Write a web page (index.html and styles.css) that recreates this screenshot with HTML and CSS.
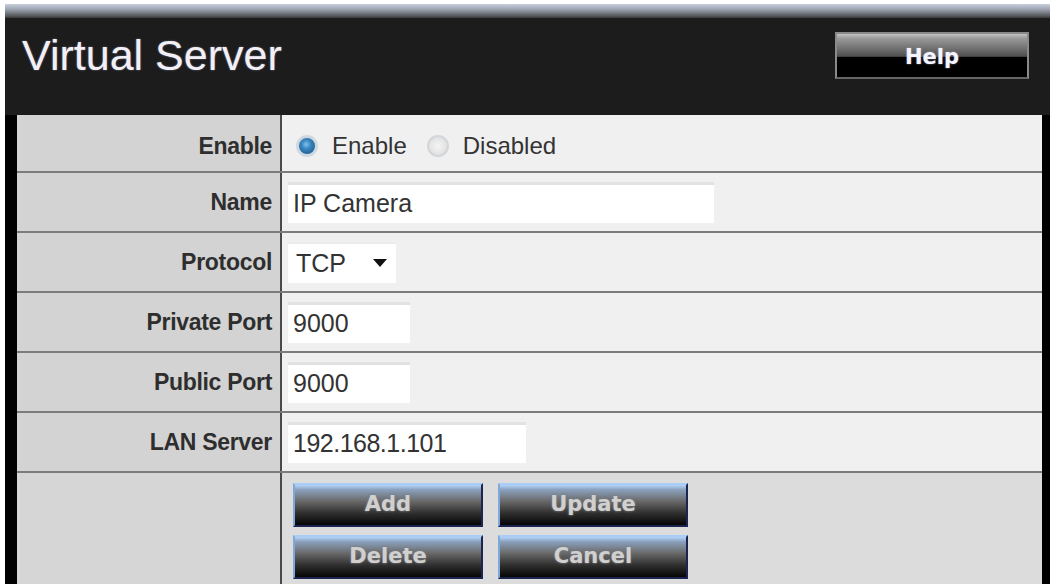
FILE: index.html
```html
<!DOCTYPE html>
<html>
<head>
<meta charset="utf-8">
<title>Virtual Server</title>
<link rel="stylesheet" href="styles.css">
</head>
<body>
<div class="page">
  <div class="topbar"></div>
  <div class="header">
    <h1 class="title">Virtual Server</h1>
    <button class="help-btn" type="button">Help</button>
  </div>
  <div class="form">
    <div class="row row-first">
      <div class="label">Enable</div>
      <div class="value">
        <label class="radio"><input type="radio" name="en" checked><span>Enable</span></label>
        <label class="radio"><input type="radio" name="en"><span>Disabled</span></label>
      </div>
    </div>
    <div class="row">
      <div class="label">Name</div>
      <div class="value"><input class="field field-name" type="text" value="IP Camera"></div>
    </div>
    <div class="row">
      <div class="label">Protocol</div>
      <div class="value">
        <span class="select-wrap">
          <select class="select"><option>TCP</option><option>UDP</option><option>Both</option></select>
          <svg class="select-arrow" width="14" height="9" viewBox="0 0 14 9"><path d="M0 0 H14 L7 8 Z" fill="#111"/></svg>
        </span>
      </div>
    </div>
    <div class="row">
      <div class="label">Private Port</div>
      <div class="value"><input class="field field-port" type="text" value="9000"></div>
    </div>
    <div class="row">
      <div class="label">Public Port</div>
      <div class="value"><input class="field field-port" type="text" value="9000"></div>
    </div>
    <div class="row">
      <div class="label">LAN Server</div>
      <div class="value"><input class="field field-ip" type="text" value="192.168.1.101"></div>
    </div>
    <div class="row row-actions">
      <div class="label"></div>
      <div class="value">
        <div class="actions">
          <button class="act-btn" type="button">Add</button>
          <button class="act-btn" type="button">Update</button>
          <button class="act-btn" type="button">Delete</button>
          <button class="act-btn" type="button">Cancel</button>
        </div>
      </div>
    </div>
  </div>
</div>
</body>
</html>
```
FILE: styles.css
```css
html, body {
  margin: 0;
  padding: 0;
  background: #ffffff;
  height: 584px;
  overflow: hidden;
}
.page {
  margin: 4px 0 0 5px;
  width: 1045px;
  font-family: "Liberation Sans", Arial, sans-serif;
}
.topbar {
  height: 14px;
  background: linear-gradient(#c9d1df 0%, #9aa1ad 40%, #5d6066 80%, #3a3a3a 100%);
}
.header {
  height: 97px;
  background: #1c1c1c;
  display: flex;
  align-items: flex-start;
  justify-content: space-between;
  padding: 0 21px 0 17px;
}
.title {
  margin: 12px 0 0 0;
  font-family: "Liberation Sans", Arial, sans-serif;
  font-weight: normal;
  font-size: 43px;
  line-height: 50px;
  color: #f2f0f4;
  text-shadow: 0 0 2px rgba(200,200,255,0.5);
}
.help-btn {
  margin-top: 14px;
  width: 194px;
  height: 47px;
  border: 2px solid #8a8a8a;
  border-bottom-color: #666;
  background: linear-gradient(#c4c4c4 0%, #9a9a9a 10%, #6e6e6e 35%, #4e4e4e 52%, #000 54%, #000 100%);
  color: #f4f4ff;
  font-family: "DejaVu Sans", Verdana, sans-serif;
  font-weight: bold;
  font-size: 21px;
  padding: 2px 0 0 0;
  text-shadow: 0 0 2px rgba(210,210,255,0.6);
}
.form {
  border-left: 12px solid #000;
  border-right: 8px solid #000;
  height: 469px;
  background: #dcdcdc;
}
.row {
  display: flex;
  height: 58px;
  border-bottom: 2px solid #7c7c7c;
}
.row-first {
  height: 56px;
}
.label {
  width: 255px;
  padding-right: 8px;
  background: #d3d3d3;
  border-right: 2px solid #4a4a4a;
  display: flex;
  align-items: center;
  justify-content: flex-end;
  font-weight: bold;
  font-size: 23px;
  color: #2e2e2e;
  letter-spacing: -0.3px;
}
.value {
  flex: 1;
  background: #f0f0f0;
  display: flex;
  align-items: center;
  padding-left: 6px;
  font-size: 24px;
  color: #333;
}
.row-first .label, .row-first .value {
  padding-top: 6px;
}
.radio {
  display: inline-flex;
  align-items: center;
  margin-right: 12px;
}
.radio input {
  appearance: none;
  -webkit-appearance: none;
  width: 22px;
  height: 22px;
  margin: 0 14px 0 8px;
  border-radius: 50%;
  border: 2px solid #d2d6da;
  background: radial-gradient(circle at 50% 50%, #f4f4f4 0%, #e2e2e2 70%, #cfcfcf 100%);
  box-sizing: border-box;
}
.radio input:checked {
  border: 3px solid #cfd8e0;
  background: radial-gradient(circle at 45% 40%, #7fc0ec 0%, #3a86c0 35%, #1f5f94 80%);
}
.radio span {
  font-size: 24px;
}
.field {
  height: 41px;
  box-sizing: border-box;
  border: none;
  border-top: 3px solid #e2e2e2;
  background: #ffffff;
  font-family: "Liberation Sans", Arial, sans-serif;
  font-size: 25px;
  color: #333;
  padding: 0 0 0 5px;
  outline: none;
}
.field-name { width: 426px; }
.field-port { width: 122px; }
.field-ip { width: 238px; letter-spacing: -0.5px; }
.select-wrap {
  position: relative;
  display: inline-block;
}
.select {
  appearance: none;
  -webkit-appearance: none;
  width: 108px;
  height: 41px;
  border: none;
  border-top: 2px solid #ececec;
  background: #ffffff;
  font-family: "Liberation Sans", Arial, sans-serif;
  font-size: 25px;
  color: #333;
  padding: 0 0 0 8px;
  outline: none;
  display: block;
}
.select-arrow {
  position: absolute;
  left: 85px;
  top: 17px;
  pointer-events: none;
}
.row-actions {
  height: 111px;
  border-bottom: none;
}
.row-actions .label {
  background: #d6d6d6;
}
.row-actions .value {
  background: #dcdcdc;
  align-items: flex-start;
  padding-left: 11px;
  padding-top: 10px;
}
.actions {
  display: grid;
  grid-template-columns: 190px 190px;
  column-gap: 15px;
  row-gap: 8px;
}
.act-btn {
  height: 44px;
  border: 2px solid #1c2450;
  border-top-color: #a8cdf6;
  border-left-color: #7fa8d8;
  background: linear-gradient(#b4d4f8 0%, #8aa0bc 12%, #6a6a6a 40%, #303030 70%, #050505 100%);
  color: #d0d0d0;
  font-family: "DejaVu Sans", Verdana, sans-serif;
  font-weight: bold;
  font-size: 21px;
  padding: 0 0 2px 0;
  text-shadow: 0 0 3px #777, 0 0 1px #999;
}
```
